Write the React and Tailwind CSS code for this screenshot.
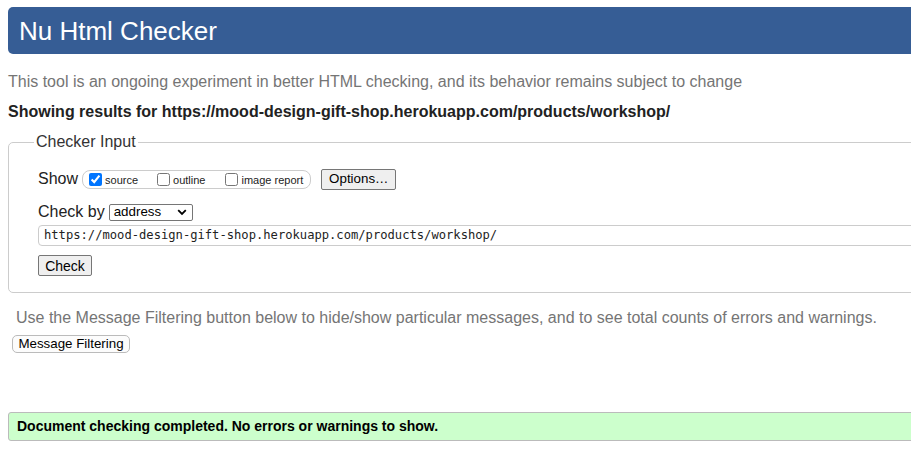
export default function App() {
  return (
    <div className="w-[911px] h-[454px] overflow-hidden bg-white font-['Liberation_Sans',Arial,sans-serif]">
      <div className="pl-2 pt-[7px]">
        <div className="h-[47px] w-[1000px] rounded-l-[5px] bg-[#365d95] flex items-center pl-[11px]">
          <h1 className="text-[26px] leading-none text-white">Nu Html Checker</h1>
        </div>
      </div>
      <p className="ml-2 mt-[18px] text-[16px] leading-[20px] text-[#757575] whitespace-nowrap">
        This tool is an ongoing experiment in better HTML checking, and its behavior remains subject to change
      </p>
      <p className="ml-2 mt-[10px] text-[16px] leading-[20px] font-bold text-[#222] whitespace-nowrap">
        Showing results for https://mood-design-gift-shop.herokuapp.com/products/workshop/
      </p>
      <fieldset className="ml-2 mt-[10px] w-[1000px] border border-[#cccccc] rounded-l-[5px] pl-[25px] pt-0 pb-[14px]">
        <legend className="px-[2px] text-[16px] leading-[20px] text-[#333]">Checker Input</legend>
        <div className="pl-[4px]">
          <div className="mt-[16px] flex items-center h-[22px]">
            <span className="text-[16px] leading-[20px] text-[#222]">Show</span>
            <div className="ml-[4px] h-[19px] flex items-center border border-[#cccccc] rounded-[8px] pl-[6px] pr-[7px]">
              <input type="checkbox" defaultChecked className="m-0 w-[13px] h-[13px]" />
              <span className="ml-[3px] mr-[19px] text-[11px] leading-none text-[#222] pt-[2px]">source</span>
              <input type="checkbox" className="m-0 w-[13px] h-[13px]" />
              <span className="ml-[3px] mr-[20px] text-[11px] leading-none text-[#222] pt-[2px]">outline</span>
              <input type="checkbox" className="m-0 w-[13px] h-[13px]" />
              <span className="ml-[3px] text-[11px] leading-none text-[#222] pt-[2px]">image report</span>
            </div>
            <button className="ml-[10px] w-[75px] h-[21px] bg-[#efefef] border border-[#767676] rounded-[2px] text-[13.33px] leading-none text-black">
              Options…
            </button>
          </div>
          <div className="mt-[12px] flex items-center h-[20px]">
            <span className="text-[16px] leading-[20px] text-[#222]">Check by</span>
            <div className="ml-[4px] w-[84px] h-[17px] border border-[#767676] rounded-[2px] flex items-center justify-between pl-[4px] pr-[5px] bg-white">
              <span className="text-[13.33px] leading-none text-black">address</span>
              <svg width="10" height="7" viewBox="0 0 10 7">
                <path d="M1.2 1.2 L5 5 L8.8 1.2" fill="none" stroke="#000" strokeWidth="1.8" />
              </svg>
            </div>
          </div>
          <div className="mt-[3px] w-[900px] h-[21px] border border-[#cccccc] rounded-l-[4px] flex items-center pl-[5px]">
            <span className="font-['DejaVu_Sans_Mono',monospace] text-[12.15px] leading-none text-[#222]">
              https://mood-design-gift-shop.herokuapp.com/products/workshop/
            </span>
          </div>
          <button className="mt-[9px] w-[54px] h-[21px] bg-[#efefef] border border-[#767676] rounded-[2px] text-[14px] leading-none text-black">
            Check
          </button>
        </div>
      </fieldset>
      <p className="ml-4 mt-[15px] text-[16px] leading-[20px] text-[#757575] whitespace-nowrap">
        Use the Message Filtering button below to hide/show particular messages, and to see total counts of errors and warnings.
      </p>
      <button className="ml-3 mt-[7px] w-[118px] h-[18px] bg-[#fcfcfc] border border-[#bbbbbb] rounded-[5px] text-[13.33px] leading-none text-black">
        Message Filtering
      </button>
      <div className="ml-2 mt-[57px] w-[1000px] h-[29px] bg-[#ccffcc] border border-[#bbbbbb] rounded-l-[3px] flex items-center pl-[8px]">
        <span className="text-[14px] leading-none font-bold text-black">
          Document checking completed. No errors or warnings to show.
        </span>
      </div>
    </div>
  );
}
